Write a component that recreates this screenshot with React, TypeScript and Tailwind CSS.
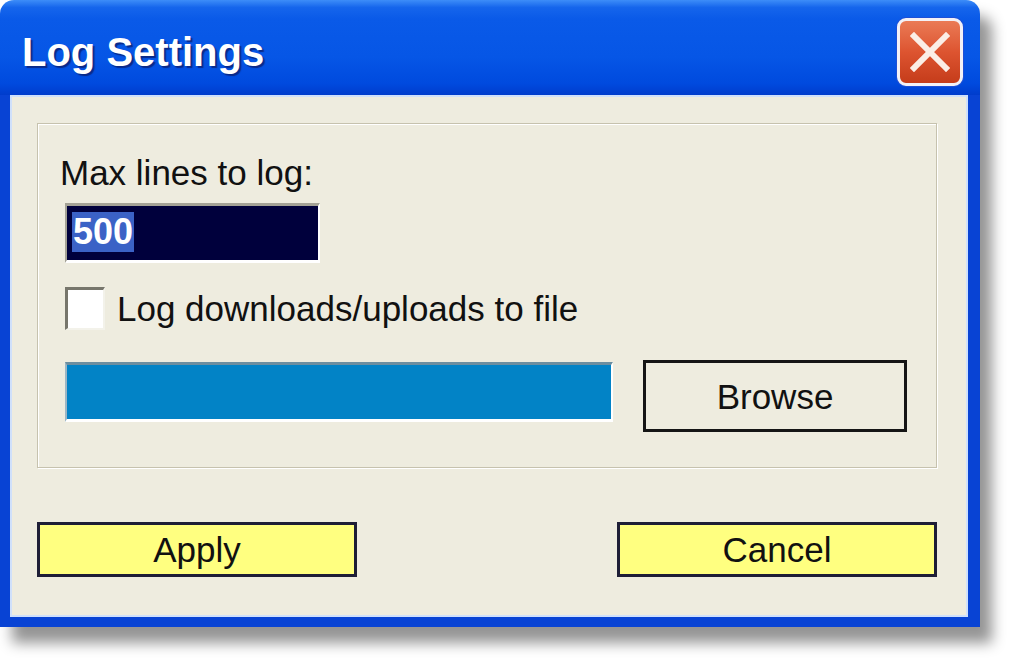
import { useState } from "react"

const font = { fontFamily: '"Liberation Sans", Arial, sans-serif' }

function CloseButton() {
  return (
    <button className="w-[66px] h-[68px] rounded-[9px] border-[3px] border-[#f3f1f6] bg-gradient-to-b from-[#ea7a55] via-[#dd5430] to-[#c53c1a] shadow-[0_0_0_1px_#1d4fd6] flex items-center justify-center">
      <svg width="40" height="40" viewBox="0 0 40 40">
        <path d="M4 4 L36 36 M36 4 L4 36" stroke="#fbeee6" strokeWidth="6" strokeLinecap="square" />
      </svg>
    </button>
  )
}

export default function App() {
  const [logToFile, setLogToFile] = useState(false)

  return (
    <div className="w-[1020px] h-[667px] bg-white overflow-hidden" style={font}>
      <div className="w-[980px] h-[627px] flex flex-col rounded-t-[14px] shadow-[12px_16px_14px_rgba(0,0,0,0.42)]">
        {/* Title bar */}
        <div className="h-[95px] shrink-0 rounded-t-[14px] bg-[linear-gradient(to_bottom,#3d8df8_0%,#1565ec_8%,#0a5ae8_20%,#0656e6_60%,#004ade_88%,#003ccc_100%)] flex items-center justify-between pt-2 pl-[22px] pr-[17px]">
          <span className="text-[40px] font-bold text-white leading-none [text-shadow:2px_2px_1px_#0a2a8a]">
            Log Settings
          </span>
          <CloseButton />
        </div>

        {/* Body */}
        <div className="flex-1 bg-[#eeecdf] border-l-[10px] border-r-[12px] border-b-[10px] border-[#0843d4] shadow-[inset_2px_2px_0_#cfe0fb,inset_-2px_-2px_0_#cfe0fb] pt-[28px] pl-[27px] pr-[31px]">
          {/* Group box */}
          <div className="w-[900px] h-[345px] border border-[#c6c2ae] shadow-[inset_1px_1px_0_#ffffff,1px_1px_0_#ffffff] pt-[29px] pl-[27px] pr-[29px]">
            <div className="text-[35px] leading-[40px] text-[#111] -ml-[5px]">Max lines to log:</div>

            <div className="mt-[10px] w-[255px] h-[60px] bg-[#00003c] border-t-[3px] border-l-[2px] border-[#a4a296] border-r-[2px] border-r-white border-b-[3px] border-b-white pl-[5px] pt-[6px]">
              <span className="inline-block bg-[#3b62c6] text-white font-bold text-[36px] leading-[40px] px-[1px]">500</span>
            </div>

            <label className="mt-[24px] flex items-center gap-[12px] cursor-pointer">
              <span
                className="w-[40px] h-[43px] bg-white border-t-[3px] border-l-[3px] border-[#77766c] border-r-[2px] border-r-[#f3f2ea] border-b-[2px] border-b-[#f3f2ea] flex items-center justify-center"
                onClick={() => setLogToFile(!logToFile)}
              >
                {logToFile && (
                  <svg width="24" height="24" viewBox="0 0 24 24">
                    <path d="M3 12 L9 18 L21 5" stroke="#21a121" strokeWidth="4" fill="none" />
                  </svg>
                )}
              </span>
              <span className="text-[35px] leading-[40px] text-[#111]">Log downloads/uploads to file</span>
            </label>

            <div className="mt-[30px] flex items-start gap-[30px]">
              <div className="mt-[2px] w-[548px] h-[60px] bg-[#0283c6] border-t-[3px] border-[#6c8ea0] border-l-[2px] border-l-[#9cb6c4] border-b-[3px] border-b-white border-r-[2px] border-r-white" />
              <button className="w-[264px] h-[72px] bg-[#eeecdf] border-[3px] border-[#151515] text-[35px] text-[#111] leading-none">
                Browse
              </button>
            </div>
          </div>

          {/* Buttons */}
          <div className="mt-[54px] w-[900px] flex justify-between">
            <button className="w-[320px] h-[55px] bg-[#ffff80] border-[3px] border-[#1e1e36] text-[35px] text-[#111] leading-none">
              Apply
            </button>
            <button className="w-[320px] h-[55px] bg-[#ffff80] border-[3px] border-[#1e1e36] text-[35px] text-[#111] leading-none">
              Cancel
            </button>
          </div>
        </div>
      </div>
    </div>
  )
}
